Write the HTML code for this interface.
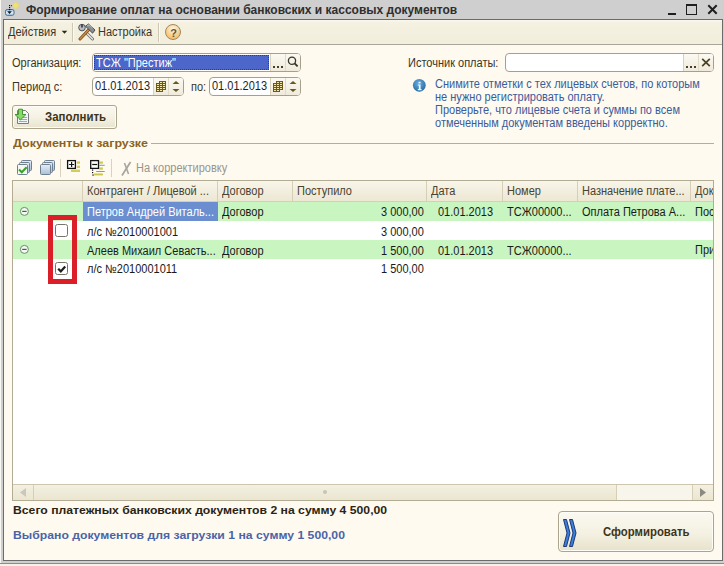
<!DOCTYPE html>
<html><head><meta charset="utf-8">
<style>
*{margin:0;padding:0;box-sizing:border-box}
html,body{width:724px;height:566px;overflow:hidden;background:#fbf8ee}
body{position:relative;font-family:"Liberation Sans",sans-serif;font-size:12px;color:#3a3528}
.a{position:absolute}
.t{position:absolute;white-space:nowrap;line-height:14px;height:14px;font-size:12px;transform:scaleX(.917);transform-origin:0 0}
.b{position:absolute;white-space:nowrap;line-height:14px;height:14px;font-size:12px;font-weight:bold}
.bb{position:absolute;white-space:nowrap;line-height:14px;height:14px;font-size:11px;font-weight:bold;transform-origin:0 0}
.sep{position:absolute;width:1px;background:#d9d3be}
.btn{position:absolute;background:linear-gradient(#fbf9f2,#efeadb);border-left:1px solid #d8d1bb}
.dot{position:absolute;width:2px;height:2px;background:#45402a}
</style></head><body>
<!-- outer frame -->
<div class="a" style="left:0;top:0;width:724px;height:566px;background:#cfcfcf"></div>
<div class="a" style="left:0;top:0;width:1px;height:566px;background:#f8f7f2"></div>
<div class="a" style="left:0;top:563px;width:724px;height:1px;background:#8c8c8c"></div>
<div class="a" style="left:0;top:564px;width:724px;height:2px;background:#f6f3e6"></div>
<!-- window -->
<div class="a" style="left:3px;top:19px;width:720px;height:542px;border:1px solid #6b6b6b;background:#fefaf0"></div>
<!-- title -->
<svg class="a" style="left:0;top:0" width="24" height="19" viewBox="0 0 24 19">
  <defs><linearGradient id="tb" x1="0" y1="0" x2="0" y2="1"><stop offset="0" stop-color="#9cc4e4"/><stop offset="0.5" stop-color="#d8ecfa"/><stop offset="1" stop-color="#b4d4ee"/></linearGradient></defs>
  <rect x="5.5" y="9.5" width="8.5" height="5.8" rx="1.8" fill="url(#tb)" stroke="#4e6a80"/>
  <rect x="9" y="5" width="1.2" height="1.2" fill="#111"/><rect x="11" y="5" width="1.2" height="1.2" fill="#222"/>
  <rect x="9" y="7" width="1.2" height="1.2" fill="#111"/><rect x="9" y="9" width="1.2" height="1.2" fill="#111"/>
  <path d="M7.2 11.2h4.6L9.5 14z" fill="#0d1520"/>
  <path d="M15.7 1.9l3.6 3.6-3.6 3.6-3.6-3.6z" fill="#f0e070" stroke="#e8d868" stroke-width="0.6"/>
</svg>
<div class="b" style="left:26px;top:3px;color:#2e2e2e">Формирование оплат на основании банковских и кассовых документов</div>
<div class="a" style="left:668px;top:13px;width:8px;height:2px;background:#1e1e1e"></div>
<div class="a" style="left:686px;top:4px;width:11px;height:11px;border:1px solid #1e1e1e;border-top-width:2px"></div>
<svg class="a" style="left:707px;top:4px" width="11" height="11" viewBox="0 0 11 11"><path d="M1.3 1.3l8.4 8.4M9.7 1.3l-8.4 8.4" stroke="#1e1e1e" stroke-width="2"/></svg>
<!-- toolbar -->
<div class="a" style="left:4px;top:20px;width:718px;height:24px;background:linear-gradient(#faf8ee,#f4f1e1 3px,#f2eedc)"></div>
<div class="a" style="left:4px;top:44px;width:718px;height:1px;background:#a9a69a"></div>
<div class="t" style="left:8px;top:25px">Действия</div>
<svg class="a" style="left:61px;top:30px" width="7" height="5"><path d="M0.7 0.8h5.6l-2.8 3z" fill="#2a2818"/></svg>
<div class="sep" style="left:72px;top:23px;height:19px;background:#cdc8b6"></div><div class="sep" style="left:73px;top:23px;height:19px;background:#fbf9f0"></div>
<svg class="a" style="left:77px;top:23px" width="19" height="18" viewBox="0 0 19 18">
  <path d="M10 10.5l5.5 5.5" stroke="#6e6e6e" stroke-width="3" stroke-linecap="round"/>
  <path d="M10 10.5l5.5 5.5" stroke="#e8e8e8" stroke-width="1.4" stroke-linecap="round"/>
  <circle cx="5" cy="4.6" r="3.3" fill="#b8bcc0" stroke="#505458" stroke-width="1"/>
  <path d="M5 1.5v3" stroke="#303438" stroke-width="1.6"/>
  <path d="M3 16L11.5 7" stroke="#7a4a18" stroke-width="3" stroke-linecap="round"/>
  <path d="M3 16L11.5 7" stroke="#c98f48" stroke-width="1.4" stroke-linecap="round"/>
  <path d="M8.5 3.2l3-2.2 6.5 6-2.4 3.2z" fill="#8a8e92" stroke="#3e4246" stroke-width="0.9"/>
  <path d="M10 3l2-1.2 3.5 3.2" stroke="#d0d4d8" stroke-width="0.8" fill="none"/>
</svg>
<div class="t" style="left:98px;top:25px">Настройка</div>
<div class="sep" style="left:158px;top:23px;height:19px;background:#cdc8b6"></div><div class="sep" style="left:159px;top:23px;height:19px;background:#fbf9f0"></div>
<div class="a" style="left:165px;top:24px;width:16px;height:16px;border-radius:50%;border:1px solid #a48660;background:radial-gradient(circle at 50% 30%,#fdf0d4 10%,#f7cf8c 55%,#eeb15c)"></div>
<div class="b" style="left:169px;top:25.5px;color:#66553a;width:9px;text-align:center;font-size:11px">?</div>

<!-- form -->
<div class="t" style="left:12px;top:56px">Организация:</div>
<div class="a" style="left:92px;top:53px;width:209px;height:19px;border:1px solid #a6a08a;border-radius:4px;background:#fff"></div>
<div class="a" style="left:94px;top:55px;width:175px;height:15px;background:#4c66c9;outline:1px dotted #2e3c8c;outline-offset:-1px"></div>
<div class="t" style="left:96px;top:56px;color:#fff">ТСЖ "Престиж"</div>
<div class="btn" style="left:270px;top:54px;width:30px;height:17px;border-radius:0 2px 2px 0"></div>
<div class="sep" style="left:285px;top:54px;height:17px;background:#e0dac6"></div>
<div class="dot" style="left:273px;top:66px"></div><div class="dot" style="left:277px;top:66px"></div><div class="dot" style="left:281px;top:66px"></div>
<svg class="a" style="left:286px;top:55px" width="14" height="14" viewBox="0 0 14 14"><circle cx="6" cy="5.8" r="3.6" fill="none" stroke="#38362a" stroke-width="1.3"/><path d="M8.6 8.4l3 3" stroke="#38362a" stroke-width="1.8"/></svg>

<div class="t" style="left:12px;top:80px">Период с:</div>
<div class="a" style="left:92px;top:77px;width:92px;height:19px;border:1px solid #a6a08a;border-radius:4px;background:#fff"></div>
<div class="t" style="left:95px;top:79px;color:#1e1e1e">01.01.2013</div>
<div class="btn" style="left:153px;top:78px;width:30px;height:17px;border-radius:0 2px 2px 0"></div>
<div class="sep" style="left:168px;top:78px;height:17px;background:#e0dac6"></div>
<div class="t" style="left:191px;top:80px">по:</div>
<div class="a" style="left:209px;top:77px;width:92px;height:19px;border:1px solid #a6a08a;border-radius:4px;background:#fff"></div>
<div class="t" style="left:212px;top:79px;color:#1e1e1e">01.01.2013</div>
<div class="btn" style="left:270px;top:78px;width:30px;height:17px;border-radius:0 2px 2px 0"></div>
<div class="sep" style="left:285px;top:78px;height:17px;background:#e0dac6"></div>
<!-- calendar + spin icons -->
<svg class="a" style="left:0;top:0" width="724" height="100">
  <g id="cal">
    <rect x="159" y="81" width="7" height="9" fill="#6a581c"/>
    <g fill="#f3e9b0"><rect x="160" y="82" width="2" height="1"/><rect x="163" y="82" width="2" height="1"/><rect x="163" y="84" width="2" height="1"/><rect x="163" y="86" width="2" height="1"/><rect x="163" y="88" width="2" height="1"/></g>
    <rect x="156" y="83" width="7" height="9" fill="#6a581c"/>
    <g fill="#f3e9b0"><rect x="157" y="84" width="2" height="1"/><rect x="160" y="84" width="2" height="1"/><rect x="157" y="86" width="2" height="1"/><rect x="160" y="86" width="2" height="1"/><rect x="157" y="88" width="2" height="1"/><rect x="160" y="88" width="2" height="1"/><rect x="157" y="90" width="2" height="1"/><rect x="160" y="90" width="2" height="1"/></g>
    <path d="M172.5 84h7l-3.5-3z M172.5 89h7l-3.5 3z" fill="#6a581c"/>
  </g>
  <use href="#cal" x="117"/>
</svg>

<div class="t" style="left:408px;top:56px">Источник оплаты:</div>
<div class="a" style="left:505px;top:53px;width:209px;height:19px;border:1px solid #a6a08a;border-radius:4px;background:#fff"></div>
<div class="btn" style="left:683px;top:54px;width:30px;height:17px;border-radius:0 2px 2px 0"></div>
<div class="sep" style="left:698px;top:54px;height:17px;background:#e0dac6"></div>
<div class="dot" style="left:686px;top:66px"></div><div class="dot" style="left:690px;top:66px"></div><div class="dot" style="left:694px;top:66px"></div>
<svg class="a" style="left:701px;top:58px" width="10" height="9" viewBox="0 0 10 9"><path d="M1.2 0.8l7.6 7.4M8.8 0.8l-7.6 7.4" stroke="#4a4322" stroke-width="1.7"/></svg>

<svg class="a" style="left:412px;top:78px" width="15" height="15" viewBox="0 0 15 15">
  <defs><radialGradient id="ig" cx="45%" cy="35%" r="60%"><stop offset="0" stop-color="#6aaee0"/><stop offset="1" stop-color="#2d70a8"/></radialGradient></defs>
  <circle cx="7.3" cy="7.3" r="6.4" fill="url(#ig)"/>
  <rect x="6.6" y="3.8" width="2" height="1.6" fill="#f0fbff"/>
  <path d="M5.8 6.4h2.8v4.6h1v1.2h-3.8v-1.2h1v-3.4h-1z" fill="#e8fbff"/>
</svg>
<div class="a" style="left:435px;top:78px;line-height:13px;font-size:12px;color:#3a5c9c;white-space:nowrap;transform:scaleX(.917);transform-origin:0 0">Снимите отметки с тех лицевых счетов, по которым<br>не нужно регистрировать оплату.<br>Проверьте, что лицевые счета и суммы по всем<br>отмеченным документам введены корректно.</div>

<!-- Заполнить -->
<div class="a" style="left:12px;top:105px;width:105px;height:24px;border:1px solid #aca58e;border-radius:3px;background:linear-gradient(#fbf9f0,#f4f1e3 55%,#e9e4ce);box-shadow:inset 0 0 0 1px #fdfcf6"></div>
<svg class="a" style="left:12px;top:105px" width="24" height="24" viewBox="0 0 24 24">
  <path d="M5.5 5.5h8l3 3v10h-11z" fill="#f2f6fb" stroke="#7c7c7c"/>
  <path d="M7 12.5h8M7 14.5h8M7 16.5h8" stroke="#8fa9d6" stroke-width="1"/>
  <path d="M6.5 4.2h4v5.3h3.5l-5.5 5.3-5.5-5.3h3.5z" fill="#84dc62" stroke="#3d8a2c" stroke-width="0.9"/>
</svg>
<div class="bb" style="left:44.5px;top:109.5px;font-size:12px;color:#3e3518;transform:scaleX(0.955)">Заполнить</div>

<!-- section -->
<div class="bb" style="left:12.5px;top:135.5px;font-size:11.5px;color:#8c6222;transform:scaleX(1.084)">Документы к загрузке</div>
<div class="a" style="left:151px;top:143px;width:563px;height:1px;background:#b9ad8c"></div>
<svg class="a" style="left:0;top:155px" width="140" height="25" viewBox="0 155 140 25">
  <defs><linearGradient id="pg" x1="0" y1="0" x2="0" y2="1"><stop offset="0" stop-color="#e6eef8"/><stop offset="1" stop-color="#a9bfd8"/></linearGradient></defs>
  <g id="pages">
    <rect x="21.5" y="160.5" width="10" height="10" rx="1" fill="url(#pg)" stroke="#6f8090"/>
    <rect x="19.5" y="162.5" width="10" height="10" rx="1" fill="url(#pg)" stroke="#6f8090"/>
    <rect x="17.5" y="164.5" width="10" height="10" rx="1" fill="url(#pg)" stroke="#6f8090"/>
  </g>
  <rect x="18" y="165" width="9" height="9" fill="#f4f8f0"/>
  <path d="M19 169.5l2.8 2.8 4.8-5" fill="none" stroke="#3aa02a" stroke-width="2"/>
  <use href="#pages" x="23"/>
  <defs><linearGradient id="yb" x1="0" y1="0" x2="0" y2="1"><stop offset="0" stop-color="#f4f08a"/><stop offset="1" stop-color="#b4b02a"/></linearGradient></defs>
  <rect x="76.8" y="161" width="3.2" height="2.5" fill="url(#yb)"/>
  <rect x="76.8" y="165.2" width="3.2" height="2.5" fill="url(#yb)"/>
  <rect x="71" y="169.2" width="9" height="2.5" fill="url(#yb)"/>
  <rect x="67.6" y="160.6" width="7.8" height="7.8" fill="#fff" stroke="#111" stroke-width="1.3"/>
  <path d="M69.1 164.5h5M71.6 162v5" stroke="#111" stroke-width="1.2"/>
  <rect x="99.3" y="161" width="3.6" height="2.5" fill="url(#yb)"/>
  <rect x="99.3" y="167" width="3.6" height="2.5" fill="url(#yb)"/>
  <rect x="94.1" y="173" width="8.8" height="2.3" fill="url(#yb)"/>
  <path d="M99.3 165.3h5.4M96.2 171.5h8.5" stroke="#5e9aa8" stroke-width="0.9"/>
  <rect x="90.7" y="160.6" width="7.8" height="7.8" fill="#fff" stroke="#111" stroke-width="1.3"/>
  <path d="M92.2 164.5h5" stroke="#111" stroke-width="1.2"/>
  <rect x="92" y="169.5" width="1.2" height="1.2" fill="#111"/><rect x="92" y="172" width="1.2" height="1.2" fill="#111"/><rect x="92.3" y="174.5" width="1.5" height="1.1" fill="#111"/>
  <path d="M122 175.5l8.5-13.5" stroke="#a8a6a0" stroke-width="1.8"/>
  <path d="M124.5 163l4 11" stroke="#a8a6a0" stroke-width="1.6"/>
</svg>
<div class="sep" style="left:60px;top:159px;height:18px"></div>
<div class="sep" style="left:111px;top:159px;height:18px"></div>
<div class="t" style="left:136px;top:161px;color:#9a958a">На корректировку</div>

<!-- table -->
<div class="a" style="left:12px;top:180px;width:702px;height:321px;border:1px solid #b3ac94;background:#fff"></div>
<div class="a" style="left:13px;top:181px;width:700px;height:21px;background:linear-gradient(#f8f5ea,#ede7d3);border-bottom:1px solid #d6cfb6"></div>
<div class="a" style="left:13px;top:202px;width:700px;height:19px;background:#c8f5c0"></div>
<div class="a" style="left:13px;top:240px;width:700px;height:19px;background:#c8f5c0"></div>
<div class="a" style="left:83px;top:202px;width:135px;height:19px;background:#6a8ecf"></div>

<div class="sep" style="left:82px;top:181px;height:20px;background:#d6cfb6"></div>
<div class="sep" style="left:217px;top:181px;height:20px;background:#d6cfb6"></div>
<div class="sep" style="left:292px;top:181px;height:20px;background:#d6cfb6"></div>
<div class="sep" style="left:426px;top:181px;height:20px;background:#d6cfb6"></div>
<div class="sep" style="left:502px;top:181px;height:20px;background:#d6cfb6"></div>
<div class="sep" style="left:577px;top:181px;height:20px;background:#d6cfb6"></div>
<div class="sep" style="left:690px;top:181px;height:20px;background:#d6cfb6"></div>

<div class="t" style="left:87px;top:184px;color:#4a4330">Контрагент / Лицевой ...</div>
<div class="t" style="left:222px;top:184px;color:#4a4330">Договор</div>
<div class="t" style="left:297px;top:184px;color:#4a4330">Поступило</div>
<div class="t" style="left:431px;top:184px;color:#4a4330">Дата</div>
<div class="t" style="left:507px;top:184px;color:#4a4330">Номер</div>
<div class="t" style="left:582px;top:184px;color:#4a4330">Назначение плате...</div>
<div class="a" style="left:691px;top:181px;width:22px;height:20px;overflow:hidden"><div class="t" style="left:4px;top:3px;color:#4a4330">Документ</div></div>

<!-- rows -->
<svg class="a" style="left:19px;top:206px" width="11" height="11"><circle cx="5.4" cy="5.4" r="4" fill="#f2fbf0" stroke="#6e8a6e" stroke-width="1"/><path d="M3.2 5.4h4.4" stroke="#505850" stroke-width="1.2"/></svg>
<svg class="a" style="left:19px;top:244px" width="11" height="11"><circle cx="5.4" cy="5.4" r="4" fill="#f2fbf0" stroke="#6e8a6e" stroke-width="1"/><path d="M3.2 5.4h4.4" stroke="#505850" stroke-width="1.2"/></svg>
<div class="t" style="left:87px;top:204.7px;color:#fff">Петров Андрей Виталь...</div>
<div class="t" style="left:222px;top:204.7px;color:#1a1a1a">Договор</div>
<div class="t" style="left:381px;top:204.7px;color:#1a1a1a">3 000,00</div>
<div class="t" style="left:438px;top:204.7px;color:#1a1a1a">01.01.2013</div>
<div class="t" style="left:507px;top:204.7px;color:#1a1a1a">ТСЖ00000...</div>
<div class="t" style="left:582px;top:204.7px;color:#1a1a1a">Оплата Петрова А...</div>
<div class="a" style="left:691px;top:202px;width:22px;height:19px;overflow:hidden"><div class="t" style="left:4px;top:2.7px;color:#1a1a1a">Поступление</div></div>

<div class="a" style="left:55px;top:224px;width:13px;height:13px;border:1px solid #77746a;border-radius:2.5px;background:#fff"></div>
<div class="t" style="left:87px;top:224.7px;color:#1a1a1a">л/с №2010001001</div>
<div class="t" style="left:381px;top:224.7px;color:#1a1a1a">3 000,00</div>

<div class="t" style="left:87px;top:243.7px;color:#1a1a1a">Алеев Михаил Севасть...</div>
<div class="t" style="left:222px;top:243.7px;color:#1a1a1a">Договор</div>
<div class="t" style="left:381px;top:243.7px;color:#1a1a1a">1 500,00</div>
<div class="t" style="left:438px;top:243.7px;color:#1a1a1a">01.01.2013</div>
<div class="t" style="left:507px;top:243.7px;color:#1a1a1a">ТСЖ00000...</div>
<div class="a" style="left:691px;top:240px;width:22px;height:19px;overflow:hidden"><div class="t" style="left:4px;top:2.7px;color:#1a1a1a">Приход</div></div>

<div class="a" style="left:55px;top:262px;width:13px;height:13px;border:1px solid #77746a;border-radius:2.5px;background:#fff"></div>
<svg class="a" style="left:55px;top:262px" width="13" height="13"><path d="M3.2 6.8l2.6 2.6 4.4-5" fill="none" stroke="#1e1e1e" stroke-width="2.2"/></svg>
<div class="t" style="left:87px;top:262px;color:#1a1a1a">л/с №2010001011</div>
<div class="t" style="left:381px;top:262px;color:#1a1a1a">1 500,00</div>

<!-- red box -->
<div class="a" style="left:48px;top:215px;width:29px;height:69px;border:5px solid #da1f28"></div>

<!-- scrollbar -->
<div class="a" style="left:13px;top:484px;width:700px;height:16px;background:linear-gradient(#f3f0e2,#ebe6d0);border-top:1px solid #cdc6ad"></div>
<div class="a" style="left:616px;top:485px;width:76px;height:15px;background:#f7f5ec"></div>
<div class="sep" style="left:33px;top:485px;height:15px;background:#d6cfb6"></div>
<div class="sep" style="left:616px;top:485px;height:15px;background:#d6cfb6"></div>
<div class="sep" style="left:692px;top:485px;height:15px;background:#d6cfb6"></div>
<svg class="a" style="left:19px;top:488px" width="8" height="9"><path d="M7 0v9L1 4.5z" fill="#cac7bd"/></svg>
<svg class="a" style="left:699px;top:488px" width="8" height="9"><path d="M1 0v9l6-4.5z" fill="#8c897e"/></svg>
<div class="a" style="left:323px;top:490px;width:4px;height:4px;border-radius:50%;background:#c8c4b4"></div>

<!-- bottom -->
<div class="bb" style="left:12.5px;top:502.7px;font-size:11.5px;color:#2a2414;transform:scaleX(1.061)">Всего платежных банковских документов 2 на сумму 4 500,00</div>
<div class="bb" style="left:12.5px;top:527.9px;font-size:11.5px;color:#4a64a8;transform:scaleX(1.061)">Выбрано документов для загрузки 1 на сумму 1 500,00</div>

<div class="a" style="left:558px;top:511px;width:156px;height:41px;border:1px solid #aca58e;border-radius:4px;background:linear-gradient(#fbf9f0,#f4f1e3 55%,#e8e2ca);box-shadow:inset 0 0 0 1px #fdfcf6"></div>
<svg class="a" style="left:0;top:0" width="724" height="566">
  <path d="M563.5 519.5h3l3.5 13.5-3.5 13.5h-3l3.5-13.5z" fill="#3d80da" stroke="#0e2a6c" stroke-width="0.9"/>
  <path d="M569.5 519.5h3l3.5 13.5-3.5 13.5h-3l3.5-13.5z" fill="#3d80da" stroke="#0e2a6c" stroke-width="0.9"/>
</svg>
<div class="bb" style="left:603px;top:524.8px;font-size:12px;color:#3e3518;transform:scaleX(0.947)">Сформировать</div>
</body></html>
